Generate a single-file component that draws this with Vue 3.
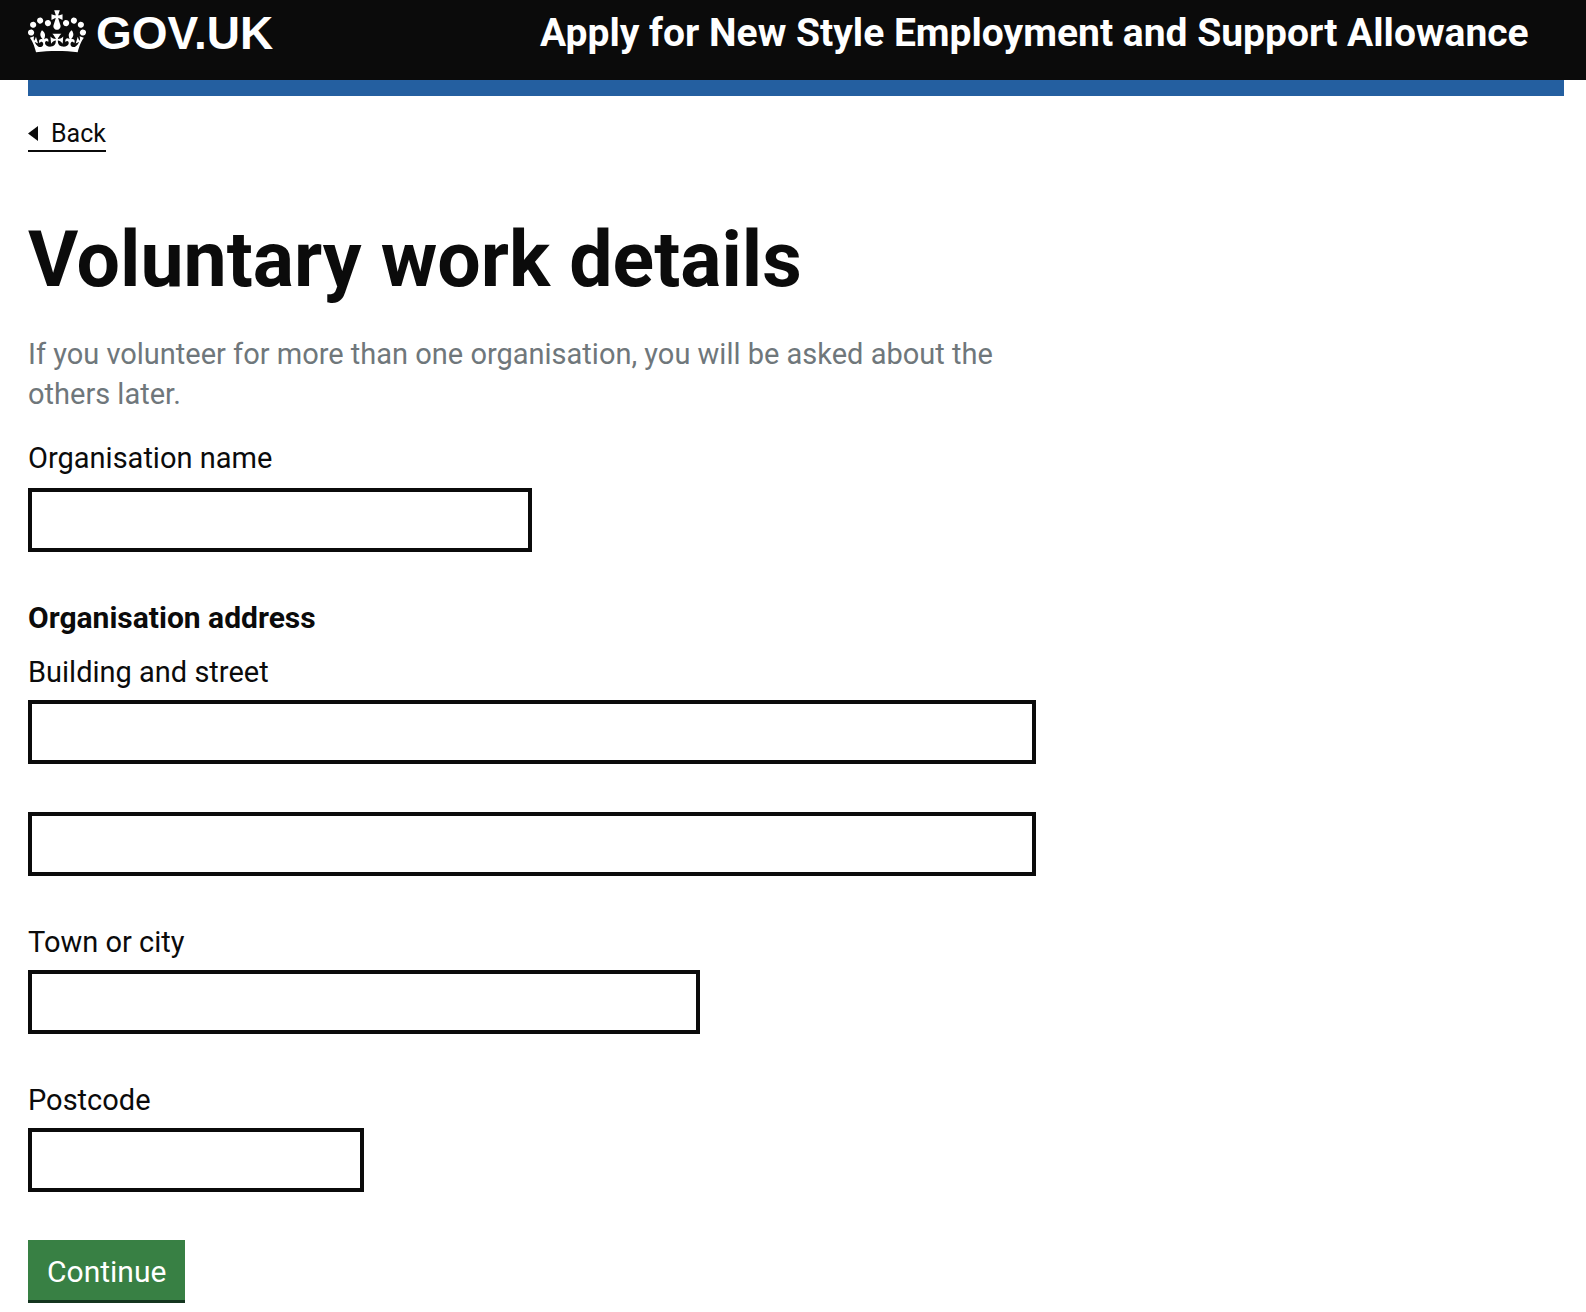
<script setup>
import { reactive } from 'vue'

const form = reactive({
  organisation: '',
  line1: '',
  line2: '',
  town: '',
  postcode: '',
})
</script>

<template>
  <div class="page">
    <header class="header">
      <div class="header-inner">
        <a class="logo" href="#" aria-label="GOV.UK">
          <svg class="crown" viewBox="0 0 132 97" aria-hidden="true">
            <path fill="currentColor" fill-rule="evenodd" d="M25 30.2c3.5 1.5 7.7-.2 9.1-3.7 1.5-3.6-.2-7.8-3.9-9.2-3.6-1.4-7.6.3-9.1 3.9-1.4 3.5.3 7.5 3.9 9zM9 39.5c3.6 1.5 7.8-.2 9.2-3.7 1.5-3.6-.2-7.8-3.9-9.1-3.6-1.5-7.6.2-9.1 3.8-1.4 3.5.3 7.5 3.8 9zM4.4 57.2c3.5 1.5 7.7-.2 9.1-3.8 1.5-3.6-.2-7.7-3.9-9.1-3.5-1.5-7.6.3-9.1 3.8-1.4 3.5.3 7.6 3.9 9.1zm38.3-21.4c3.5 1.5 7.7-.2 9.1-3.8 1.5-3.6-.2-7.7-3.9-9.1-3.6-1.5-7.6.3-9.1 3.8-1.3 3.6.4 7.7 3.9 9.1zm64.4-5.6c-3.6 1.5-7.8-.2-9.1-3.7-1.5-3.6.2-7.8 3.8-9.2 3.6-1.4 7.7.3 9.2 3.9 1.3 3.5-.4 7.5-3.9 9zm15.9 9.3c-3.6 1.5-7.7-.2-9.1-3.7-1.5-3.6.2-7.8 3.7-9.1 3.6-1.5 7.7.2 9.2 3.8 1.5 3.5-.3 7.5-3.8 9zm4.7 17.7c-3.6 1.5-7.8-.2-9.2-3.8-1.5-3.6.2-7.7 3.9-9.1 3.6-1.5 7.7.3 9.2 3.8 1.3 3.5-.4 7.6-3.9 9.1zM89.3 35.8c-3.6 1.5-7.8-.2-9.2-3.8-1.4-3.6.2-7.7 3.9-9.1 3.6-1.5 7.7.3 9.2 3.8 1.4 3.6-.3 7.7-3.9 9.1zM69.7 17.7l8.9 4.7V9.3l-8.9 2.8c-.2-.3-.5-.6-.9-.9L72.4 0H59.6l3.5 11.2c-.3.3-.6.5-.9.9l-8.8-2.8v13.1l8.8-4.7c.3.3.6.7.9.9l-5 15.4v.1c-.2.8-.4 1.6-.4 2.4 0 4.1 3.1 7.5 7 8.1h.2c.3 0 .7.1 1 .1.4 0 .7 0 1-.1h.2c4-.6 7.1-4.1 7.1-8.1 0-.8-.1-1.7-.4-2.4V34l-5.1-15.4c.4-.2.7-.6 1-.9zM66 92.8c16.9 0 32.8 1.1 47.1 3.2 4-16.9 8.9-26.7 14-33.5l-9.6-3.4c1 4.9 1.1 7.2 0 10.2-1.5-1.4-3-4.3-4.2-8.7L108.6 76c2.8-2 5-3.2 7.5-3.3-4.4 9.4-10 11.9-13.6 11.2-4.3-.8-6.3-4.6-5.6-7.9 1-4.7 5.7-5.9 8-.5 4.3-8.7-3-11.4-7.6-8.8 7.1-7.2 7.9-13.5 2.1-21.1-8 6.1-8.1 12.3-4.5 20.8-4.7-5.4-12.1-2.5-9.5 6.2 3.4-5.2 7.9-2 7.2 3.1-.6 4.3-6.4 7.8-13.5 7.2-10.3-.9-10.9-8-11.2-13.8 2.5-.5 7.1 1.8 11 7.3L80.2 60c-4.1 4.4-8 5.3-12.3 5.4 1.4-4.4 8-11.6 8-11.6H55.5s6.4 7.2 7.9 11.6c-4.2-.1-8-1-12.3-5.4l1.4 16.4c3.9-5.5 8.5-7.7 10.9-7.3-.3 5.8-.9 12.8-11.1 13.8-7.2.6-12.9-2.9-13.5-7.2-.7-5 3.8-8.3 7.1-3.1 2.7-8.7-4.6-11.6-9.4-6.2 3.7-8.5 3.6-14.7-4.6-20.8-5.8 7.6-5 13.9 2.2 21.1-4.7-2.6-11.9.1-7.7 8.8 2.3-5.5 7.1-4.2 8.1.5.7 3.3-1.3 7.1-5.7 7.9-3.5.7-9-1.8-13.5-11.2 2.5.1 4.7 1.3 7.5 3.3l-4.7-15.4c-1.2 4.4-2.7 7.2-4.3 8.7-1.1-3-.9-5.3 0-10.2l-9.5 3.4c5 6.9 9.9 16.7 14 33.5 14.8-2.1 30.8-3.2 47.7-3.2z" />
          </svg>
          <span class="logo-text">GOV.UK</span>
        </a>
        <a class="service" href="#">Apply for New Style Employment and Support Allowance</a>
      </div>
    </header>

    <div class="container">
      <div class="bar"></div>
      <a class="back" href="#">
        <svg class="arrow" viewBox="0 0 10 16" aria-hidden="true"><path d="M0 7.5 10 0v15z" fill="currentColor" /></svg>
        Back
      </a>

      <main class="grid">
        <form class="form" @submit.prevent>
          <h1 class="title">Voluntary work details</h1>
          <p class="hint">If you volunteer for more than one organisation, you will be asked about the others later.</p>

          <div class="field organisation">
            <label for="organisation">Organisation name</label>
            <input id="organisation" v-model="form.organisation" class="half" type="text">
          </div>

          <fieldset class="address">
            <legend>Organisation address</legend>
            <div class="field">
              <label for="line1">Building and street</label>
              <input id="line1" v-model="form.line1" type="text">
            </div>
            <input v-model="form.line2" class="line2" type="text" aria-label="Building and street line 2">
            <div class="field">
              <label for="town">Town or city</label>
              <input id="town" v-model="form.town" class="two-thirds" type="text">
            </div>
            <div class="field">
              <label for="postcode">Postcode</label>
              <input id="postcode" v-model="form.postcode" class="third" type="text">
            </div>
          </fieldset>

          <button class="continue" type="submit">Continue</button>
        </form>
      </main>
    </div>
  </div>
</template>

<style>
body {
  margin: 0;
  background: #fff;
}
</style>

<style scoped>
.page {
  color: #0b0b0b;
  font-family: Roboto, "Noto Sans", sans-serif;
  font-size: 29px;
  line-height: 40px;
}

.header {
  padding: 10px 22px 20px 28px;
  background: #0b0b0b;
}

.header-inner {
  display: grid;
  grid-template-columns: 1fr 2fr;
  align-items: start;
  min-height: 50px;
}

.logo {
  display: flex;
  gap: 10px;
  color: #fff;
  text-decoration: none;
}

.crown {
  width: 58px;
  height: 43px;
}

.logo-text {
  font-family: "Liberation Sans", Arial, sans-serif;
  font-size: 46px;
  font-weight: 700;
  line-height: 46px;
}

.service {
  color: #fff;
  font-size: 39px;
  font-weight: 700;
  line-height: 46px;
  text-decoration: none;
}

.container {
  margin: 0 22px 0 28px;
}

.bar {
  height: 16px;
  background: #245fa0;
}

.back {
  display: flex;
  align-items: center;
  gap: 13px;
  width: fit-content;
  margin-top: 22px;
  border-bottom: 2px solid #0b0b0b;
  color: #0b0b0b;
  font-size: 25px;
  line-height: 32px;
  text-decoration: none;
}

.arrow {
  width: 10px;
  height: 16px;
}

.grid {
  display: grid;
  grid-template-columns: 2fr 1fr;
  column-gap: 24px;
  padding: 68px 0 8px;
}

.title {
  margin: 0 0 34px;
  font-size: 77px;
  font-weight: 700;
  line-height: 80px;
}

.hint {
  margin: 0 0 24px;
  color: #6f777b;
}

.field {
  display: flex;
  flex-direction: column;
  gap: 8px;
}

.organisation {
  gap: 10px;
}

.address {
  min-width: 0;
  margin: 46px 0 48px;
  padding: 0;
  border: 0;
}

legend {
  margin-bottom: 14px;
  padding: 0;
  font-size: 30px;
  font-weight: 700;
}

input {
  box-sizing: border-box;
  width: 100%;
  height: 64px;
  padding: 8px;
  border: 4px solid #0b0b0b;
  border-radius: 0;
  background: #fff;
  color: inherit;
  font: inherit;
}

.line2 {
  display: block;
  margin-top: 48px;
}

.address .line2 ~ .field {
  margin-top: 46px;
}

.half {
  width: 50%;
}

.two-thirds {
  width: calc(100% * 2 / 3);
}

.third {
  width: calc(100% / 3);
}

.continue {
  display: block;
  padding: 12px 19px 8px;
  border: 0;
  background: #388044;
  box-shadow: 0 3px 0 #14351f;
  color: #fff;
  font-family: inherit;
  font-size: 30px;
  line-height: 40px;
}
</style>
